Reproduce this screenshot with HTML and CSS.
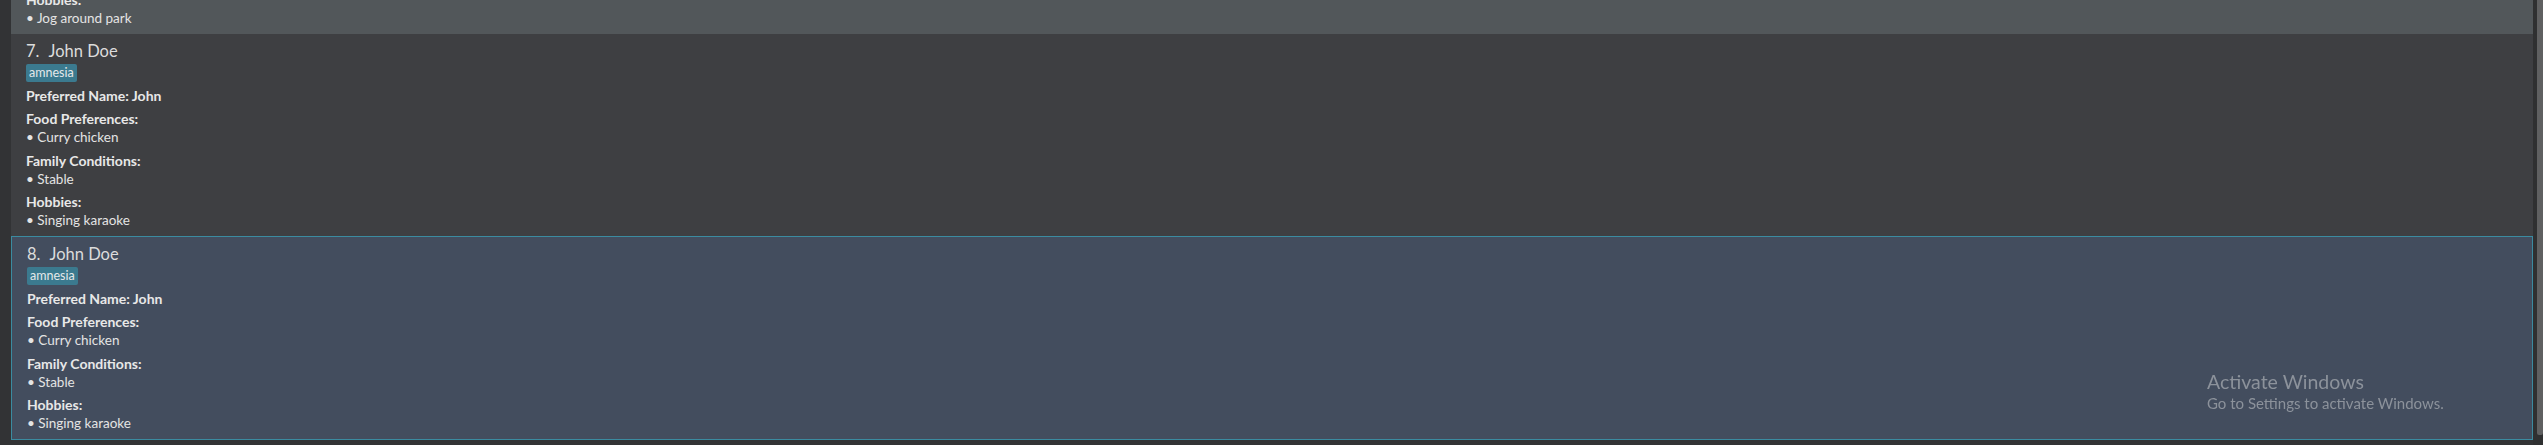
FILE: index.html
```html
<!DOCTYPE html>
<html lang="en">
<head>
<meta charset="utf-8">
<title>Patient list</title>
<link rel="stylesheet" href="styles.css">
</head>
<body>
<div class="app">
  <div class="gutter"></div>
  <div class="viewport">
    <ul class="list">
      <li class="card card-hover">
        <div class="title"><span class="index">6.</span>John Doe</div>
        <div class="tags"><span class="tag">amnesia</span></div>
        <div class="field"><span class="label">Preferred Name: John</span></div>
        <div class="field"><div class="label">Food Preferences:</div><div class="item">• Curry chicken</div></div>
        <div class="field field-wide"><div class="label">Family Conditions:</div><div class="item">• Stable</div></div>
        <div class="field"><div class="label">Hobbies:</div><div class="item">• Jog around park</div></div>
      </li>
      <li class="card">
        <div class="title"><span class="index">7.</span>John Doe</div>
        <div class="tags"><span class="tag">amnesia</span></div>
        <div class="field"><span class="label">Preferred Name: John</span></div>
        <div class="field"><div class="label">Food Preferences:</div><div class="item">• Curry chicken</div></div>
        <div class="field field-wide"><div class="label">Family Conditions:</div><div class="item">• Stable</div></div>
        <div class="field"><div class="label">Hobbies:</div><div class="item">• Singing karaoke</div></div>
      </li>
      <li class="card card-selected">
        <div class="title"><span class="index">8.</span>John Doe</div>
        <div class="tags"><span class="tag">amnesia</span></div>
        <div class="field"><span class="label">Preferred Name: John</span></div>
        <div class="field"><div class="label">Food Preferences:</div><div class="item">• Curry chicken</div></div>
        <div class="field field-wide"><div class="label">Family Conditions:</div><div class="item">• Stable</div></div>
        <div class="field"><div class="label">Hobbies:</div><div class="item">• Singing karaoke</div></div>
      </li>
    </ul>
  </div>
  <div class="scrollbar"><div class="thumb"></div></div>
</div>
<div class="watermark">
  <div class="wm-title">Activate Windows</div>
  <div class="wm-sub">Go to Settings to activate Windows.</div>
</div>
</body>
</html>
```
FILE: styles.css
```css
html, body {
  margin: 0;
  padding: 0;
  height: 100%;
}
body {
  background: #323335;
  font-family: Lato, "Liberation Sans", sans-serif;
  color: #e6e6e6;
  overflow: hidden;
}
.app {
  display: flex;
  align-items: flex-start;
  height: 445px;
  overflow: hidden;
}
.gutter {
  width: 11px;
  flex: none;
}
.viewport {
  flex: 1;
  min-width: 0;
}
.list {
  list-style: none;
  margin: -168px 0 0 0;
  padding: 0;
}
.card {
  background: #3e3f42;
  padding: 7px 15px 7px 15px;
  display: flex;
  flex-direction: column;
}
.card-hover {
  background: #52575a;
}
.card-selected {
  background: #434d5e;
  border: 1px solid #3b8ba0;
}
.title {
  font-size: 16.5px;
  line-height: 20px;
  color: #dcdcdc;
}
.index {
  margin-right: 9px;
}
.tags {
  margin-top: 3px;
  display: flex;
}
.tag {
  background: #3b7a8f;
  color: #e4e8ea;
  font-size: 12.5px;
  line-height: 18px;
  padding: 0 3px;
  border-radius: 2px;
}
.field {
  margin-top: 5px;
  font-size: 13.5px;
  line-height: 18px;
}
.field-wide {
  margin-top: 6px;
}
.label {
  font-weight: 700;
  font-size: 14px;
  color: #e8e8e8;
}
.item {
  color: #e4e4e4;
}
.scrollbar {
  width: 10px;
  flex: none;
  height: 445px;
  display: flex;
  justify-content: flex-end;
  background: #2f3031;
}
.thumb {
  width: 6px;
  height: 435px;
  background: #5f6061;
  border-radius: 0 0 2px 2px;
}
.watermark {
  position: fixed;
  left: 2207px;
  top: 370px;
  color: #8c929b;
  pointer-events: none;
}
.wm-title {
  font-size: 19.5px;
  line-height: 24px;
}
.wm-sub {
  margin-top: 0;
  font-size: 15px;
  line-height: 18px;
}
```
